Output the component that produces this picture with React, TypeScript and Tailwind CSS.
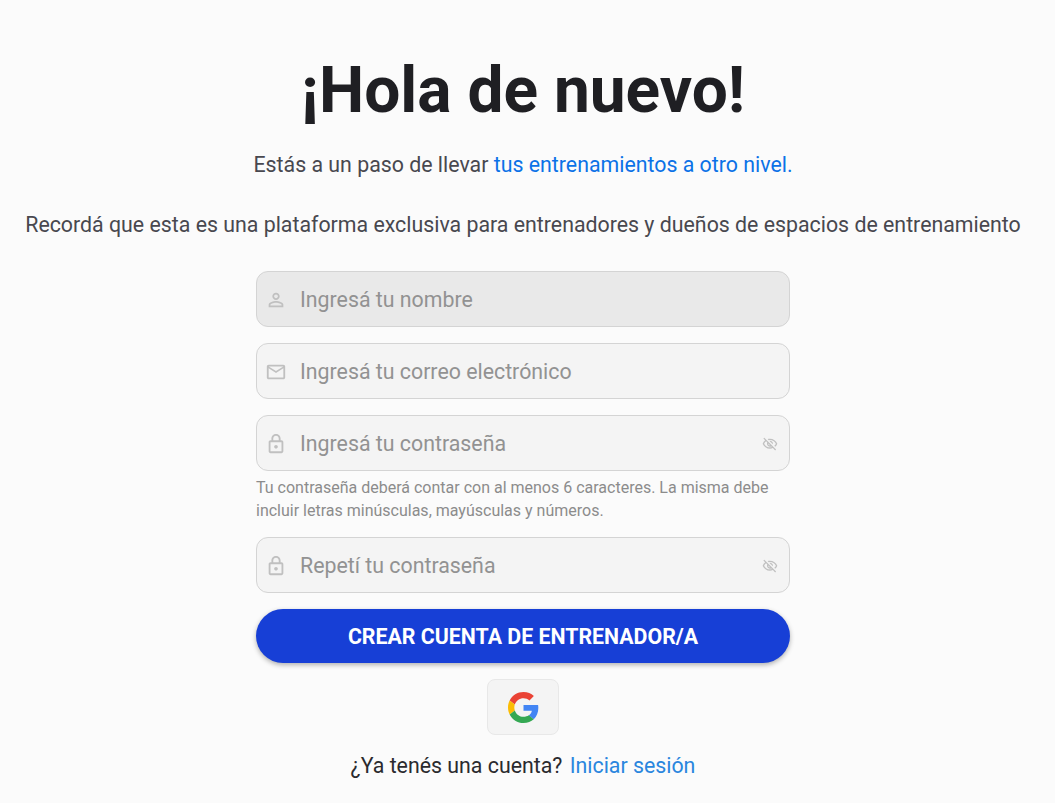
import { useState } from 'react';

const PERSON = 'M12 5.9c1.16 0 2.1.94 2.1 2.1s-.94 2.1-2.1 2.1S9.9 9.16 9.9 8s.94-2.1 2.1-2.1m0 9c2.97 0 6.1 1.46 6.1 2.1v1.1H5.9V17c0-.64 3.13-2.1 6.1-2.1M12 4C9.79 4 8 5.79 8 8s1.79 4 4 4 4-1.79 4-4-1.79-4-4-4zm0 9c-2.67 0-8 1.34-8 4v3h16v-3c0-2.66-5.33-4-8-4z';
const MAIL = 'M20 4H4c-1.1 0-1.99.9-1.99 2L2 18c0 1.1.9 2 2 2h16c1.1 0 2-.9 2-2V6c0-1.1-.9-2-2-2zm0 14H4V8l8 5 8-5v10zm-8-7L4 6h16l-8 5z';
const LOCK = 'M18 8h-1V6c0-2.76-2.24-5-5-5S7 3.24 7 6v2H6c-1.1 0-2 .9-2 2v10c0 1.1.9 2 2 2h12c1.1 0 2-.9 2-2V10c0-1.1-.9-2-2-2zM9 6c0-1.66 1.34-3 3-3s3 1.34 3 3v2H9V6zm9 14H6V10h12v10zm-6-3c1.1 0 2-.9 2-2s-.9-2-2-2-2 .9-2 2 .9 2 2 2z';
const EYE_OFF = 'M12 6c3.79 0 7.17 2.13 8.82 5.5-.59 1.22-1.42 2.27-2.41 3.12l1.41 1.41c1.39-1.23 2.49-2.77 3.18-4.53C21.27 7.11 17 4 12 4c-1.27 0-2.49.2-3.64.57l1.65 1.65C10.66 6.09 11.32 6 12 6zm-1.07 1.14L13 9.21c.57.25 1.03.71 1.28 1.28l2.07 2.07c.08-.34.14-.7.14-1.07C16.5 9.01 14.48 7 12 7c-.37 0-.72.05-1.07.14zM2.01 3.87l2.68 2.68C3.06 7.83 1.77 9.53 1 11.5 2.73 15.89 7 19 12 19c1.52 0 2.98-.29 4.32-.82l3.42 3.42 1.41-1.41L3.42 2.45 2.01 3.87zm7.5 7.5l2.61 2.61c-.04.01-.08.02-.12.02-1.38 0-2.5-1.12-2.5-2.5 0-.05.01-.08.01-.13zm-3.4-3.4l1.75 1.75c-.23.55-.36 1.15-.36 1.78 0 2.48 2.02 4.5 4.5 4.5.63 0 1.23-.13 1.77-.36l.98.98c-.88.24-1.8.38-2.75.38-3.79 0-7.17-2.13-8.82-5.5.7-1.43 1.72-2.61 2.93-3.53z';

const Field = ({
  icon,
  placeholder,
  type = 'text',
  hovered = false,
  toggle = false,
}: {
  icon: string;
  placeholder: string;
  type?: string;
  hovered?: boolean;
  toggle?: boolean;
}) => {
  const [value, setValue] = useState('');
  return (
    <div
      className={`flex h-14 items-center rounded-xl border border-[#d4d4d4] pl-[8px] pr-[11px] pt-[2px] ${
        hovered ? 'bg-[#e9e9e9]' : 'bg-[#f4f4f4]'
      }`}
    >
      <svg viewBox="0 0 24 24" className="h-[22px] w-[22px] shrink-0 fill-[#c0c0c0]">
        <path d={icon} />
      </svg>
      <input
        type={type}
        value={value}
        placeholder={placeholder}
        onChange={(e) => setValue(e.target.value)}
        className="ml-[13px] min-w-0 flex-1 bg-transparent text-[21.33px] text-[#333] outline-none placeholder:text-[#929292]"
      />
      {toggle && (
        <svg viewBox="0 0 24 24" className="h-4 w-4 shrink-0 fill-[#c0c0c0]">
          <path d={EYE_OFF} />
        </svg>
      )}
    </div>
  );
};

const GoogleLogo = () => (
  <svg viewBox="0 0 48 48" className="h-[31px] w-[31px]">
    <path fill="#EA4335" d="M24 9.5c3.54 0 6.71 1.22 9.21 3.6l6.85-6.85C35.9 2.38 30.47 0 24 0 14.62 0 6.51 5.38 2.56 13.22l7.98 6.19C12.43 13.72 17.74 9.5 24 9.5z" />
    <path fill="#4285F4" d="M46.98 24.55c0-1.57-.15-3.09-.38-4.55H24v9.02h12.94c-.58 2.96-2.26 5.48-4.78 7.18l7.73 6c4.51-4.18 7.09-10.36 7.09-17.65z" />
    <path fill="#FBBC05" d="M10.53 28.59c-.48-1.45-.76-2.99-.76-4.59s.27-3.14.76-4.59l-7.98-6.19C.92 16.46 0 20.12 0 24c0 3.88.92 7.54 2.56 10.78l7.97-6.19z" />
    <path fill="#34A853" d="M24 48c6.48 0 11.93-2.13 15.89-5.81l-7.73-6c-2.15 1.45-4.92 2.3-8.16 2.3-6.26 0-11.57-4.22-13.47-9.91l-7.98 6.19C6.51 42.62 14.62 48 24 48z" />
  </svg>
);

const App = () => {
  return (
    <div className="min-h-[803px] w-full bg-[#fbfbfb] font-['Roboto',sans-serif]">
      <div className="flex w-[1046px] flex-col items-center pt-[47px]">
        <h1 className="text-[64px] font-bold leading-[88px] text-[#1f1f23]">¡Hola de nuevo!</h1>
        <p className="mt-[18px] text-[21.33px] leading-6 text-[#48484f]">
          Estás a un paso de llevar <span className="text-[#0b72e7]">tus entrenamientos a otro nivel.</span>
        </p>
        <p className="mt-9 text-[21.33px] leading-6 text-[#48484f]">
          Recordá que esta es una plataforma exclusiva para entrenadores y dueños de espacios de entrenamiento
        </p>

        <form className="mt-[34px] flex w-[534px] flex-col gap-4">
          <Field icon={PERSON} placeholder="Ingresá tu nombre" hovered />
          <Field icon={MAIL} placeholder="Ingresá tu correo electrónico" type="email" />
          <div>
            <Field icon={LOCK} placeholder="Ingresá tu contraseña" type="password" toggle />
            <p className="mt-[5px] -mb-px text-base leading-[23px] text-[#8c8c8c]">
              Tu contraseña deberá contar con al menos 6 caracteres. La misma debe incluir letras minúsculas,
              mayúsculas y números.
            </p>
          </div>
          <Field icon={LOCK} placeholder="Repetí tu contraseña" type="password" toggle />
          <button
            type="button"
            className="h-[54px] rounded-full bg-[#173fd6] pt-[2px] text-[21.33px] font-bold text-white shadow-[0_2px_5px_rgba(0,0,0,0.3)]"
          >
            CREAR CUENTA DE ENTRENADOR/A
          </button>
          <button
            type="button"
            className="mx-auto flex h-14 w-[72px] items-center justify-center rounded-lg border border-[#e8e8e8] bg-[#f4f4f4]"
          >
            <GoogleLogo />
          </button>
        </form>

        <p className="mt-[17px] text-[21.33px] leading-[28px] text-[#2a2a2e]">
          ¿Ya tenés una cuenta? <a className="ml-[2px] text-[#2a86de]">Iniciar sesión</a>
        </p>
      </div>
    </div>
  );
};

export default App;
